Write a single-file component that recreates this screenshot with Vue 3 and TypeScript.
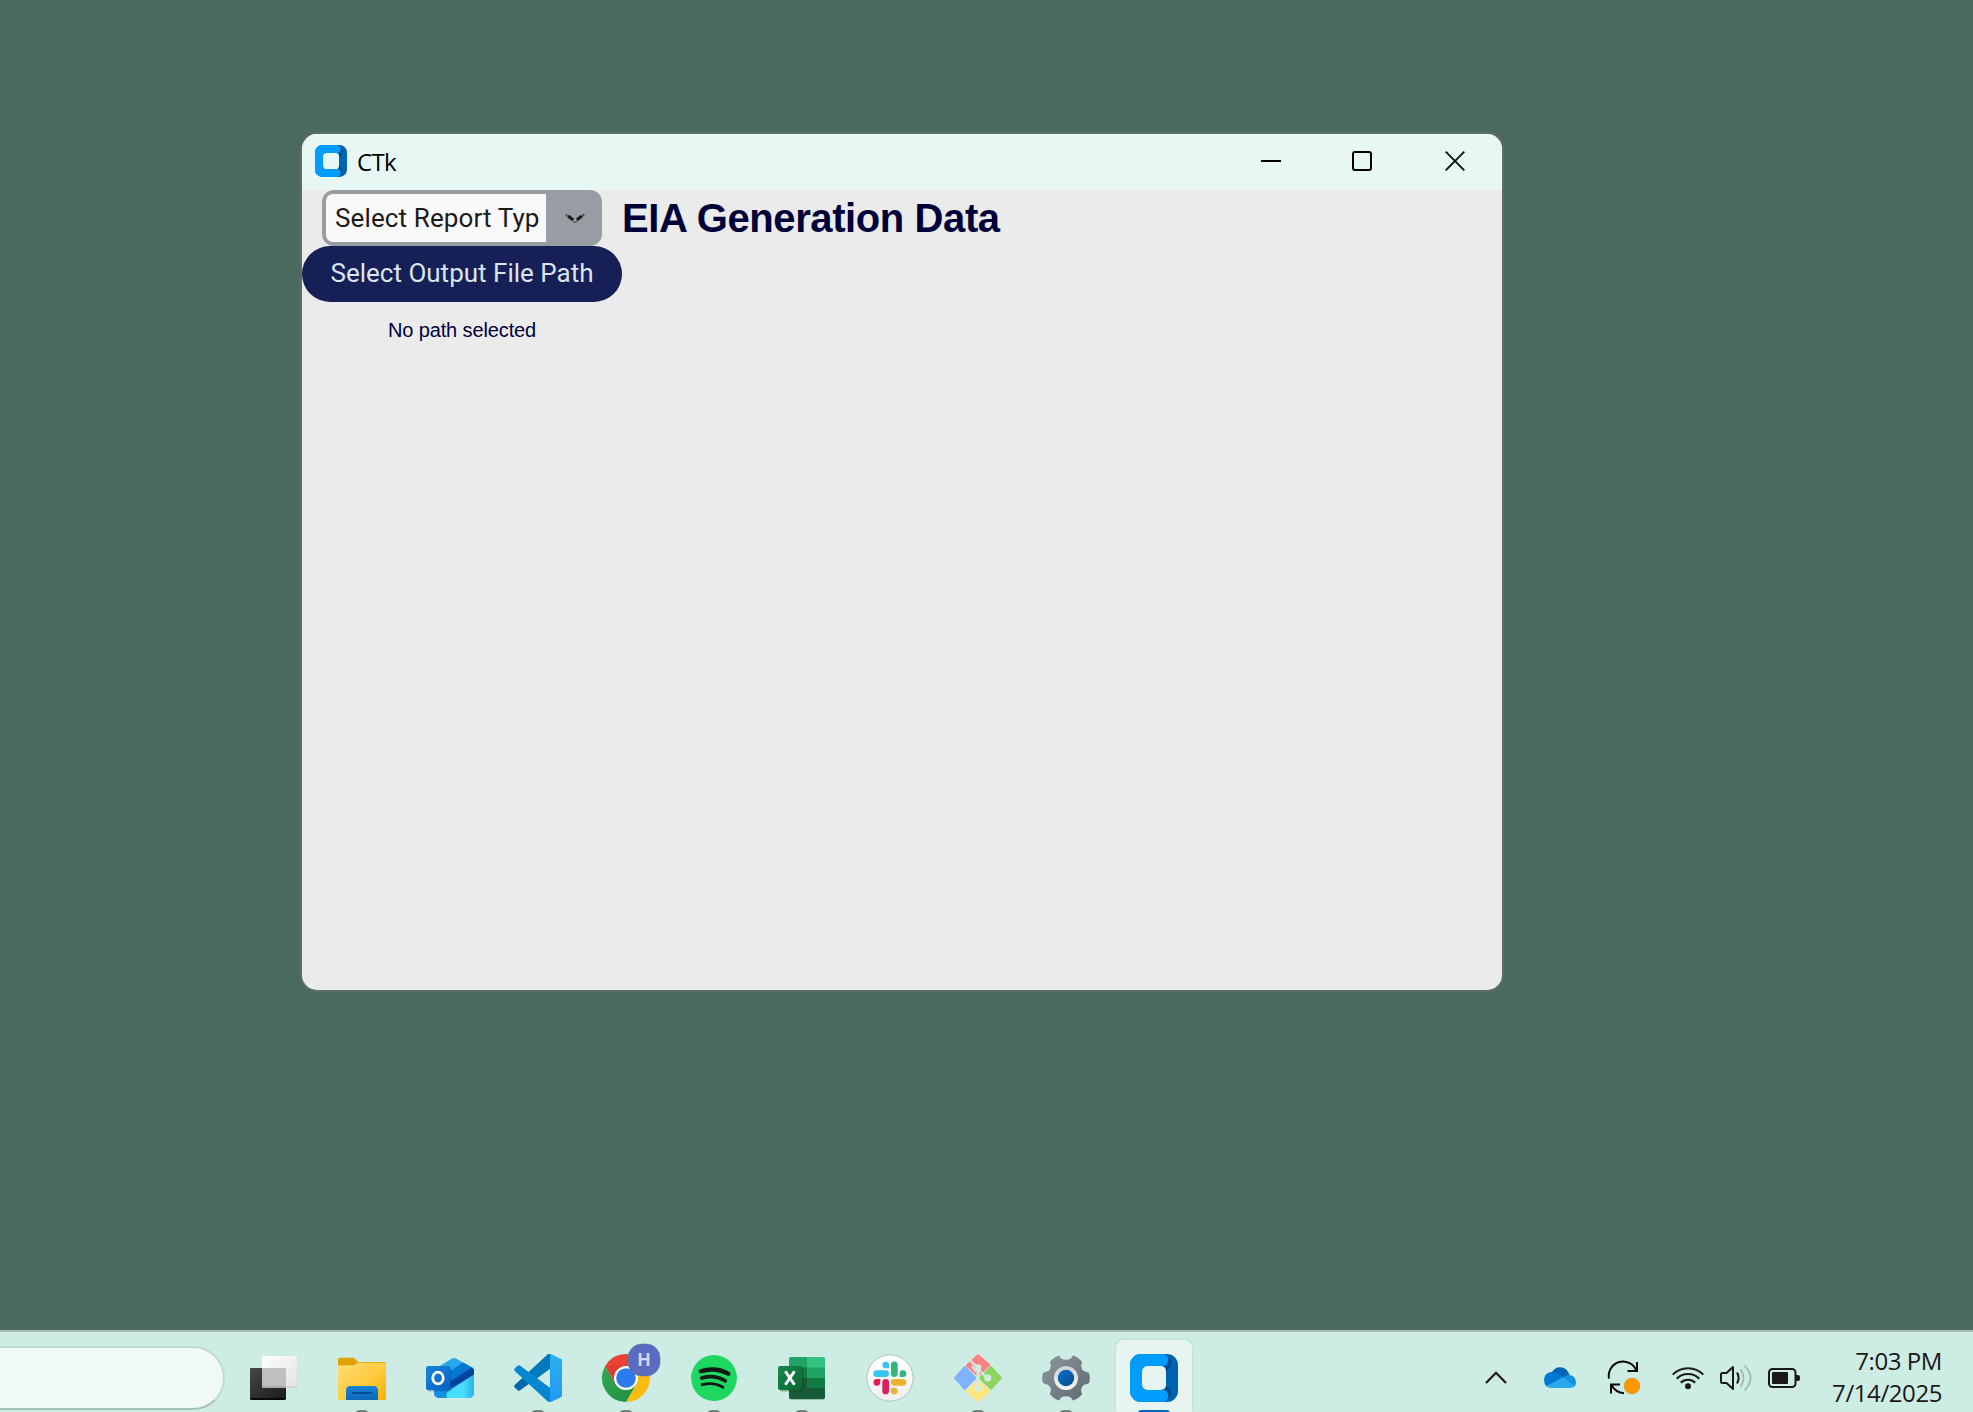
<script setup lang="ts">
import { ref } from 'vue'

interface TaskItem {
  id: string
  state: 'idle' | 'open' | 'active'
}

const reportType = ref('Select Report Typ')
const outputPath = ref('No path selected')

const tasks: TaskItem[] = [
  { id: 'taskview', state: 'idle' },
  { id: 'explorer', state: 'open' },
  { id: 'outlook', state: 'idle' },
  { id: 'vscode', state: 'open' },
  { id: 'chrome', state: 'open' },
  { id: 'spotify', state: 'open' },
  { id: 'excel', state: 'open' },
  { id: 'slack', state: 'idle' },
  { id: 'git', state: 'open' },
  { id: 'settings', state: 'open' },
  { id: 'ctk', state: 'active' },
]
</script>

<template>
  <div class="desktop">
    <main class="workspace">
      <section class="window">
        <header class="titlebar">
          <svg class="app-icon" viewBox="0 0 48 48">
            <path fill-rule="evenodd" d="M11 0H37A11 11 0 0 1 48 11V37A11 11 0 0 1 37 48H11A11 11 0 0 1 0 37V11A11 11 0 0 1 11 0zM17 12A5 5 0 0 0 12 17V31A5 5 0 0 0 17 36H31A5 5 0 0 0 36 31V17A5 5 0 0 0 31 12z" fill="#0063b1" />
            <path d="M36 12Q40 10 38 2L42 8 39 15 36 18zM36 36Q40 38 38 46L42 40 39 34 36 31z" fill="#00498f" />
            <path d="M11 0H32A6 6 0 0 1 32 12H17A5 5 0 0 0 12 17V31A5 5 0 0 0 17 36H32A6 6 0 0 1 32 48H11A11 11 0 0 1 0 37V11A11 11 0 0 1 11 0z" fill="#009dff" />
            <rect x="26" width="12" height="12" rx="6" fill="#009dff" /><rect x="26" y="36" width="12" height="12" rx="6" fill="#009dff" />
          </svg>
          <span class="title">CTk</span>
          <div class="controls">
            <svg viewBox="0 0 20 20"><path d="M0 10H20" stroke="#000" stroke-width="2" /></svg>
            <svg viewBox="0 0 20 20"><rect x="1" y="1" width="18" height="18" rx="2" fill="none" stroke="#000" stroke-width="2" /></svg>
            <svg viewBox="0 0 20 20"><path d="M.7.7 19.3 19.3M19.3.7.7 19.3" stroke="#111" stroke-width="1.9" /></svg>
          </div>
        </header>
        <div class="content">
          <div class="left">
            <div class="combo">
              <div class="combo-field"><span>{{ reportType }}</span></div>
              <div class="combo-arrow">
                <svg viewBox="0 0 20 10">
                  <path d="M.8 3 2.200 1.200M19.200 3 17.800 1.200" stroke="#333" stroke-width="1.300" />
                  <path d="M3 2.800 8.200 7M17 2.800 11.800 7" stroke="#1b1b1b" stroke-width="3" />
                  <path d="M8 8.200 10 9.600 12 8.200" fill="none" stroke="#5a5b5d" stroke-width="1.200" />
                </svg>
              </div>
            </div>
            <div class="path-btn"><span>Select Output File Path</span></div>
            <div class="path-label">{{ outputPath }}</div>
          </div>
          <h1>EIA Generation Data</h1>
        </div>
      </section>
    </main>

    <footer class="taskbar">
      <div class="search"></div>
      <nav class="tasks">
        <div v-for="t in tasks" :key="t.id" class="task" :class="t.state">
          <div class="tile">
            <svg v-if="t.id === 'taskview'" viewBox="0 0 48 48">
              <defs>
                <linearGradient id="tv1" x1="0" y1="0" x2="1" y2="1"><stop offset="0" stop-color="#484747" /><stop offset="1" stop-color="#1c1c1c" /></linearGradient>
                <linearGradient id="tv2" x1="0" y1="0" x2="1" y2="1"><stop offset="0" stop-color="#fff" /><stop offset="1" stop-color="#e2e2e2" /></linearGradient>
              </defs>
              <rect y="14" width="36" height="32" rx="1.6" fill="#080808" />
              <rect y="14" width="36" height="30" rx="1.4" fill="url(#tv1)" />
              <rect x="12" y="2" width="36" height="32" rx="1.6" fill="#d3d5d5" />
              <rect x="12" y="2" width="35.4" height="30" rx="1.4" fill="url(#tv2)" />
              <path d="M12 14H34.500A1.500 1.500 0 0 1 36 15.500V34H13.500A1.500 1.500 0 0 1 12 32.500z" fill="#bfbfbf" />
              <path d="M12 32H36V34H13.500A1.500 1.500 0 0 1 12 32.500z" fill="#a9a9a9" />
            </svg>

            <svg v-else-if="t.id === 'explorer'" viewBox="0 0 48 48">
              <defs>
                <linearGradient id="fo" x1="0" y1="0" x2="1" y2="1"><stop offset="0" stop-color="#ffdc76" /><stop offset=".55" stop-color="#ffcb3d" /><stop offset="1" stop-color="#f5b100" /></linearGradient>
                <linearGradient id="fb" x1="0" y1="0" x2="0" y2="1"><stop offset="0" stop-color="#1683d8" /><stop offset="1" stop-color="#0c68b8" /></linearGradient>
              </defs>
              <path d="M0 5.500Q0 3.700 1.800 3.700H14.500Q16 3.700 17 4.800L20 8H46.500Q48 8 48 9.500V16H0z" fill="#e0a000" />
              <path d="M0 11.200H14.500Q16.300 11.200 17.500 10.200L18.500 9.200Q19.200 8.700 20.300 8.700H46.500Q48 8.700 48 10.200V44.500Q48 46 46.500 46H1.500Q0 46 0 44.500z" fill="url(#fo)" />
              <path d="M8 46V36.500Q8 32 12.500 32H35.500Q40 32 40 36.500V46z" fill="url(#fb)" />
              <rect x="14" y="38" width="20" height="2" rx="1" fill="#0a4a91" />
            </svg>

            <svg v-else-if="t.id === 'outlook'" viewBox="0 0 48 48">
              <defs>
                <linearGradient id="ol" x1="0" y1="0" x2="1" y2="0"><stop offset="0" stop-color="#42e0fd" /><stop offset=".6" stop-color="#4bdcfb" /><stop offset="1" stop-color="#25b4ee" /></linearGradient>
                <linearGradient id="os" x1="0" y1="0" x2="1" y2="1"><stop offset="0" stop-color="#1588dd" /><stop offset="1" stop-color="#0a5fc4" /></linearGradient>
              </defs>
              <path d="M8 15.500 25.500 4.700Q28 3.300 30.500 4.700L46 13.500Q48 15 48 17V38Q48 44 42 44H14Q8 44 8 38z" fill="#28a8ea" />
              <path d="M20 20 37 8.500 46 13.500Q48 15 48 17V22L24 38H20z" fill="#0078d4" />
              <path d="M24 27.500 46 13.600Q48 15 48 17V21L25 34.500z" fill="#00459c" />
              <path d="M8 34H24L28 36 20 44H14Q8 44 8 38z" fill="#1490df" />
              <path d="M48 20.500V38Q48 44 42 44H21Q19 40 23 36.500z" fill="url(#ol)" />
              <rect x="1" y="13" width="24.500" height="24.500" rx="2" fill="#073b75" opacity=".3" />
              <rect y="12" width="24" height="24" rx="2" fill="url(#os)" />
              <ellipse cx="12" cy="24" rx="5.300" ry="5.900" fill="none" stroke="#fff" stroke-width="2.700" />
            </svg>

            <svg v-else-if="t.id === 'vscode'" viewBox="0 0 48 48">
              <defs>
                <linearGradient id="vr" x1="0" y1="0" x2="0" y2="1"><stop offset="0" stop-color="#2ab0f2" /><stop offset="1" stop-color="#2199f0" /></linearGradient>
              </defs>
              <path d="M33.500.8Q35-.4 37 .5V13.800L6.200 36.300Q4.800 37.200 3.600 36.200L.7 33.500Q-.5 32.300.7 31z" fill="#0069ae" />
              <path d="M33.500.8Q35-.4 37 .5V13.800L18 28 9 23.500z" fill="#0078bd" />
              <path d="M33.500 47.200Q35 48.400 37 47.500V34.600L6.200 11.700Q4.800 10.800 3.600 11.800L.7 14.500Q-.5 15.700.7 17z" fill="#0787d0" />
              <path d="M36 .2Q36.800 0 37.500.3L46.700 4.700Q48 5.400 48 6.800V41.200Q48 42.600 46.700 43.300L37.500 47.700Q36.800 48 36 47.800z" fill="url(#vr)" />
            </svg>

            <svg v-else-if="t.id === 'chrome'" viewBox="0 0 48 48">
              <defs>
                <linearGradient id="cg" x1="0" y1="0" x2="1" y2="1"><stop offset="0" stop-color="#34a853" /><stop offset="1" stop-color="#1e8e3e" /></linearGradient>
              </defs>
              <path d="M24 24 3.200 12A24 24 0 0 1 44.800 12z" fill="#ea4335" />
              <path d="M24 12H44.800A24 24 0 0 1 24 48L34.400 30z" fill="#fbbc14" />
              <path d="M3.200 12 13.600 30 24 36 34.400 30 24 48A24 24 0 0 1 3.200 12z" fill="url(#cg)" />
              <path d="M3.200 12H24V24L13.600 30z" fill="#e33b2e" />
              <circle cx="24" cy="24" r="12" fill="#fff" />
              <circle cx="24" cy="24" r="9.800" fill="#2b7bec" />
              <rect x="26" y="-10" width="32" height="32" rx="14" fill="#5c6bc0" stroke="#5a7aa0" stroke-width=".6" />
              <text x="42" y="12.300" text-anchor="middle" class="badge-h">H</text>
            </svg>

            <svg v-else-if="t.id === 'spotify'" viewBox="0 0 48 48">
              <circle cx="24" cy="24" r="22.900" fill="#1ed760" />
              <g fill="none" stroke="#111a14" stroke-linecap="round">
                <path d="M10.700 17.200Q25.500 12.800 38.300 19.700" stroke-width="4.300" />
                <path d="M11.600 24Q24.500 20.200 35.400 26.900" stroke-width="3.500" />
                <path d="M12.200 30.600Q23.500 27.800 33 33.200" stroke-width="2.800" />
              </g>
            </svg>

            <svg v-else-if="t.id === 'excel'" viewBox="0 0 48 48">
              <defs>
                <linearGradient id="xs" x1="0" y1="0" x2="1" y2="1"><stop offset="0" stop-color="#18884f" /><stop offset="1" stop-color="#0b6631" /></linearGradient>
              </defs>
              <rect x="11" y="3.500" width="36" height="42.300" rx="2" fill="#12492b" opacity=".35" />
              <path d="M13 3H29V14H11V5Q11 3 13 3z" fill="#21a366" />
              <path d="M29 3H45Q47 3 47 5V14H29z" fill="#33c481" />
              <path d="M11 13.500H29V24H11z" fill="#107c41" />
              <path d="M29 13.500H47V24H29z" fill="#21a366" />
              <path d="M11 24H29V34.500H11z" fill="#185c37" />
              <path d="M29 24H47V34.500H29z" fill="#107c41" />
              <path d="M11 34H47V43Q47 45 45 45H13Q11 45 11 43z" fill="#185c37" />
              <rect x="2" y="13" width="23.500" height="24.500" rx="2" fill="#063b1d" opacity=".35" />
              <rect y="12" width="24" height="24" rx="2" fill="url(#xs)" />
              <path d="M7.300 17.200 16.500 30.800M16.500 17.200 7.300 30.800" stroke="#fff" stroke-width="2.900" />
            </svg>

            <svg v-else-if="t.id === 'slack'" viewBox="0 0 48 48">
              <defs>
                <linearGradient id="sl" x1="0" y1="0" x2="0" y2="1"><stop offset="0" stop-color="#fff" /><stop offset="1" stop-color="#f0f0f0" /></linearGradient>
              </defs>
              <circle cx="24" cy="24" r="23.200" fill="url(#sl)" stroke="#9fc0b5" stroke-width=".9" />
              <g fill="#36c5f0"><path d="M23 14.300H19.700A3.300 3.300 0 1 1 23 11z" /><rect x="7.300" y="16.200" width="15.700" height="6.700" rx="3.350" /></g>
              <g fill="#2eb67d"><rect x="25" y="7.600" width="6.700" height="15.300" rx="3.350" /><path d="M33.700 22.900V19.500A3.300 3.300 0 1 1 37 22.900z" /></g>
              <g fill="#e01e5a"><path d="M14.300 25V28.300A3.400 3.400 0 1 1 11 25z" /><rect x="16.300" y="25" width="6.700" height="15.300" rx="3.350" /></g>
              <g fill="#ecb22e"><rect x="25" y="25" width="15.300" height="6.700" rx="3.350" /><path d="M25 33.700H28.300A3.350 3.350 0 1 1 25 37z" /></g>
            </svg>

            <svg v-else-if="t.id === 'git'" viewBox="0 0 48 48">
              <g stroke-linejoin="round" stroke-width="2.400">
                <path d="M24 1.500 35 11 24 21.500 13.200 11.500z" fill="#ff8080" stroke="#ff8080" />
                <path d="M10.800 13.200 21.200 24 10.800 34.700 1.300 24z" fill="#80b3ff" stroke="#80b3ff" />
                <path d="M37 13.200 46.700 24 37 34.500 26 24z" fill="#8dd35f" stroke="#8dd35f" />
                <path d="M24 26.800 35 37.400 24 46.700 13.200 37.400z" fill="#ffe680" stroke="#ffe680" />
              </g>
              <g stroke="#d2ede4" fill="none" stroke-width="2.300">
                <path d="M16.200 6.500 23.500 13.500M24 13V34M25 16 33.500 24" />
                <path d="M24 16V31" stroke-width="3" />
              </g>
              <g fill="#d2ede4"><circle cx="24" cy="13.500" r="3.300" /><circle cx="33.800" cy="24" r="3.500" /><circle cx="24" cy="34" r="3.500" /></g>
              <path d="M18 11.500 21.500 18" stroke="#d2ede4" stroke-width="1.600" />
            </svg>

            <svg v-else-if="t.id === 'settings'" viewBox="0 0 48 48">
              <defs>
                <linearGradient id="ge" x1="0" y1="0" x2="1" y2="1"><stop offset="0" stop-color="#8f979e" /><stop offset="1" stop-color="#5f6870" /></linearGradient>
                <linearGradient id="gr" x1="0" y1="0" x2="0" y2="1"><stop offset="0" stop-color="#cfd1d4" /><stop offset="1" stop-color="#f7f7f8" /></linearGradient>
                <linearGradient id="gb" x1="0" y1="0" x2="1" y2="1"><stop offset="0" stop-color="#0a74cc" /><stop offset="1" stop-color="#074a8f" /></linearGradient>
              </defs>
              <path d="M8.300 7.300Q11.500 3.500 16 1.700Q17.300 1.300 17.800 2.400Q19.200 5.700 24 5.700T30.200 2.400Q30.700 1.300 32 1.700Q36.500 3.500 39.700 7.300Q40.300 8.200 39.800 9Q38.200 12.200 40 15.300Q41.600 18 45.400 18.300Q47 18.400 47.300 19.800Q48.500 24 47.300 28.200Q47 29.600 45.400 29.700Q41.600 30 40 32.700Q38.200 35.800 39.800 39Q40.300 39.800 39.700 40.700Q36.500 44.500 32 46.300Q30.700 46.700 30.200 45.600Q28.800 42.300 24 42.300T17.800 45.600Q17.300 46.700 16 46.300Q11.500 44.500 8.300 40.700Q7.700 39.800 8.200 39Q9.800 35.800 8 32.700Q6.400 30 2.600 29.700Q1 29.600.7 28.200Q-.5 24 .7 19.800Q1 18.400 2.600 18.300Q6.400 18 8 15.300Q9.800 12.200 8.200 9Q7.700 8.200 8.300 7.300z" fill="url(#ge)" />
              <circle cx="24" cy="24" r="12" fill="url(#gr)" />
              <circle cx="24" cy="24" r="8.200" fill="url(#gb)" />
            </svg>

            <svg v-else viewBox="0 0 48 48">
              <path fill-rule="evenodd" d="M11 0H37A11 11 0 0 1 48 11V37A11 11 0 0 1 37 48H11A11 11 0 0 1 0 37V11A11 11 0 0 1 11 0zM17 12A5 5 0 0 0 12 17V31A5 5 0 0 0 17 36H31A5 5 0 0 0 36 31V17A5 5 0 0 0 31 12z" fill="#0063b1" />
              <path d="M36 12Q40 10 38 2L42 8 39 15 36 18zM36 36Q40 38 38 46L42 40 39 34 36 31z" fill="#00498f" />
              <path d="M11 0H32A6 6 0 0 1 32 12H17A5 5 0 0 0 12 17V31A5 5 0 0 0 17 36H32A6 6 0 0 1 32 48H11A11 11 0 0 1 0 37V11A11 11 0 0 1 11 0z" fill="#009dff" />
              <rect x="26" width="12" height="12" rx="6" fill="#009dff" /><rect x="26" y="36" width="12" height="12" rx="6" fill="#009dff" />
            </svg>
          </div>
          <i class="indicator"></i>
        </div>
      </nav>

      <div class="tray">
        <svg class="wide" viewBox="0 0 32 32"><path d="M6 21 16 10.800 26 21" fill="none" stroke="#191919" stroke-width="2.200" /></svg>
        <svg class="wide" viewBox="0 0 32 32">
          <path d="M8 10Q11 5 16.200 5.200 23 5.500 25.500 13L18 18 8 15z" fill="#0364b8" />
          <path d="M6 10.200Q9.500 9 13 11L20 15.500 16 20 2.500 24.500Q0 22 0 18 .3 11.500 6 10.200z" fill="#0078d4" />
          <path d="M19 15.200Q22 12.600 25.600 13 31.500 14 32 20 32 23 30.500 24.500L17 17z" fill="#1490df" />
          <path d="M2 24 19 15.200 31 24Q29.500 26 26 26H8Q4 26 2 24z" fill="#28a8ea" />
        </svg>
        <svg class="wide" viewBox="0 0 32 32">
          <g fill="none" stroke="#0a0a0a" stroke-width="2">
            <path d="M1 16.500A14.300 14.300 0 0 1 28.500 9M29 0V9H19.500" />
            <path d="M3 31.500V22.500H12M3.500 23Q7.500 30.500 16 31.200" />
          </g>
          <circle cx="24" cy="24" r="8" fill="#ff9800" stroke="#b3924d" stroke-width=".4" />
        </svg>
        <svg viewBox="0 0 32 32">
          <g fill="none" stroke="#191919" stroke-width="2">
            <path d="M.7 12.600A21.500 21.500 0 0 1 31.300 12.600M4.700 16.800A15.700 15.700 0 0 1 27.300 16.800M8.800 20.800A10.200 10.200 0 0 1 23.200 20.800" />
          </g>
          <circle cx="16" cy="24.200" r="3" fill="#191919" />
        </svg>
        <svg viewBox="0 0 32 32">
          <path d="M2.500 11H6.500L13 5V27L6.500 21H2.500Q1 21 1 19.500V12.500Q1 11 2.500 11z" fill="none" stroke="#191919" stroke-width="2" stroke-linejoin="round" />
          <path d="M17 10.500Q20.300 16 17 21.500" fill="none" stroke="#191919" stroke-width="2" />
          <path d="M20.500 7.300Q26.500 16 20.500 24.700M24.500 3.500Q36.500 16 24.500 28.500" fill="none" stroke="#a4bdb5" stroke-width="2" />
        </svg>
        <svg viewBox="0 0 32 32">
          <rect x="1" y="7" width="26.500" height="18" rx="3.500" fill="none" stroke="#191919" stroke-width="2" />
          <rect x="4" y="10" width="16" height="12" rx="1" fill="#191919" />
          <path d="M28 13H30Q32 13 32 15V17Q32 19 30 19H28z" fill="#191919" />
        </svg>
        <div class="clock"><span>7:03 PM</span><span>7/14/2025</span></div>
      </div>
    </footer>
  </div>
</template>

<style>
body { margin: 0; overflow: hidden; }
</style>

<style scoped>
.desktop { width: 1973px; height: 1412px; display: flex; flex-direction: column; background: #4a695f; overflow: hidden; }
.workspace { flex: 1; padding: 134px 0 0 302px; }
.window { width: 1200px; height: 856px; border-radius: 15px; background: #ebebeb; overflow: hidden; box-shadow: 0 0 0 2px #5d6e68; }
.titlebar { height: 56px; background: #e7f8f4; display: flex; align-items: flex-start; }
.app-icon { width: 32px; height: 32px; margin: 11px 0 0 13px; }
.title { font: 24px/32px "Open Sans", sans-serif; letter-spacing: -.7px; margin: 12px 0 0 10px; color: #000; }
.controls { margin: 17px 37px 0 auto; display: flex; }
.controls svg { width: 20px; height: 20px; margin-left: 71px; }
.controls svg:last-child { margin-left: 73px; }
.content { display: flex; align-items: flex-start; }
.left { width: 320px; display: flex; flex-direction: column; }
.combo { margin: 0 20px; height: 56px; box-sizing: border-box; border: 4px solid #979da2; border-radius: 12px; background: #979da2; display: flex; }
.combo-field { width: 220px; height: 48px; background: #f9f9fa; border-radius: 7px 0 0 7px; box-sizing: border-box; padding-left: 9px; font: 26px/48px Roboto, sans-serif; letter-spacing: .12px; color: #1a1a1a; white-space: nowrap; overflow: hidden; }
.combo-arrow { flex: 1; display: flex; align-items: center; padding-left: 19px; }
.combo-arrow svg { width: 20px; height: 10px; }
.path-btn { height: 56px; border-radius: 28px; background: #162056; color: #dce4ee; font: 26px/55px Roboto, sans-serif; text-align: center; white-space: nowrap; }
.path-label { height: 56px; text-align: center; font: 20px/56px "Liberation Sans", Arial, sans-serif; letter-spacing: -.12px; color: #00003c; }
h1 { margin: 0; font: bold 40px/56px "Liberation Sans", Arial, sans-serif; letter-spacing: -.4px; color: #000038; white-space: nowrap; }

.taskbar { height: 82px; box-sizing: border-box; border-top: 2px solid #a9bab4; background: #cdece3; display: flex; align-items: flex-start; }
.search { width: 225px; height: 64px; margin-top: 14px; box-sizing: border-box; border: 2px solid #bddcd3; border-left: 0; border-bottom-color: #a5c2b9; border-radius: 0 32px 32px 0; background: #f0f9f7; }
.tasks { display: flex; margin-left: 5px; }
.task { width: 88px; height: 80px; display: flex; flex-direction: column; align-items: center; }
.tile { width: 76px; height: 70px; flex: none; margin-top: 8px; display: flex; justify-content: center; }
.tile svg { width: 48px; height: 48px; margin-top: 14px; overflow: visible; }
.active .tile { background: #e6f5f1; border-radius: 8px 8px 0 0; box-shadow: 0 0 0 1.500px #c3e3da; }
.indicator { width: 12px; height: 6px; flex: none; border-radius: 3px; background: #78827e; }
.idle .indicator { visibility: hidden; }
.active .indicator { width: 32px; background: #0067c0; box-shadow: 0 0 0 30px #e6f5f1; clip-path: inset(0 -22px -6px -22px); }
.badge-h { font: bold 18px "Liberation Sans", Arial, sans-serif; fill: #d5d8f2; }
.tray { display: flex; margin-left: auto; padding-top: 30px; }
.tray svg { width: 32px; height: 32px; margin-right: 16px; flex: none; overflow: visible; }
.tray svg.wide { margin-right: 32px; }
.clock { width: 126px; margin: -17px 31px 0 0; display: flex; flex-direction: column; align-items: flex-end; font: 24px/32px "Open Sans", sans-serif; letter-spacing: -.42px; color: #191919; white-space: nowrap; }
</style>
